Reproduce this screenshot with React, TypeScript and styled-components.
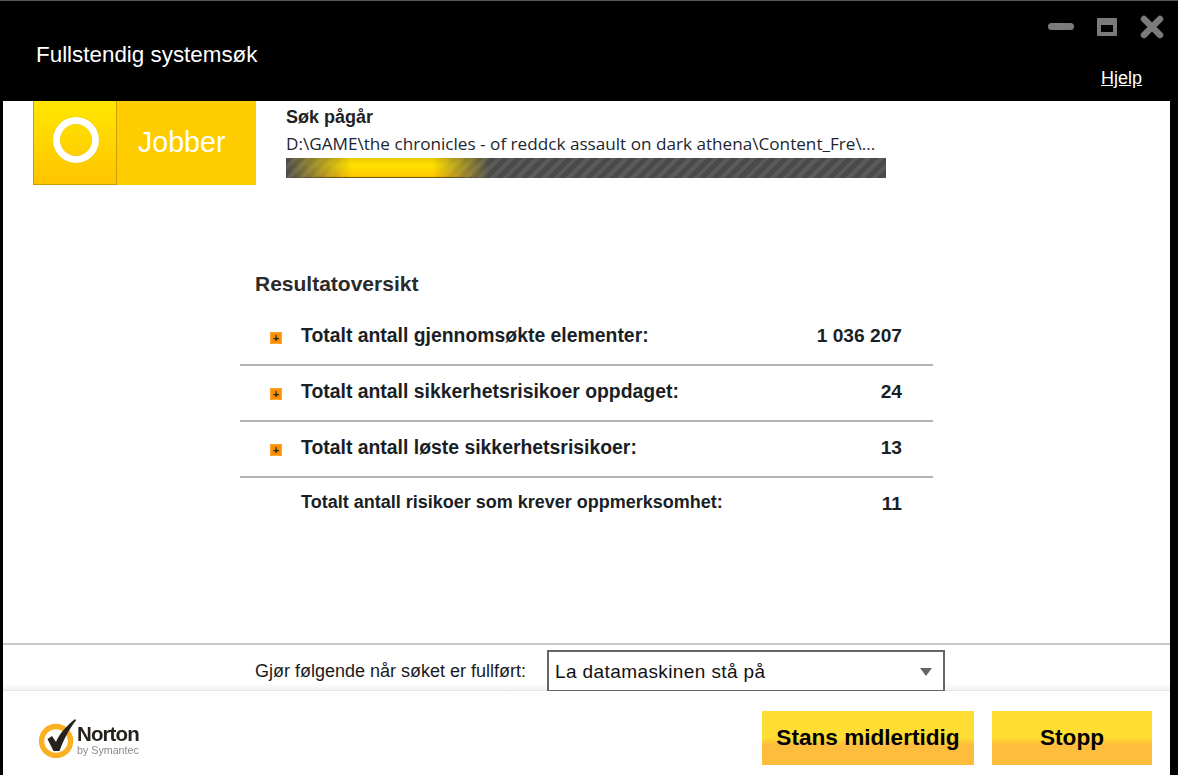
import React from "react";
import styled, { createGlobalStyle } from "styled-components";

const GlobalStyles = createGlobalStyle`
  html, body {
    margin: 0;
    padding: 0;
    height: 100%;
    overflow: hidden;
    background: #000;
    font-family: "Liberation Sans", Arial, sans-serif;
  }
`;

type Row = {
  label: string;
  value: string;
  expandable: boolean;
};

const rows: Row[] = [
  { label: "Totalt antall gjennomsøkte elementer:", value: "1 036 207", expandable: true },
  { label: "Totalt antall sikkerhetsrisikoer oppdaget:", value: "24", expandable: true },
  { label: "Totalt antall løste sikkerhetsrisikoer:", value: "13", expandable: true },
  { label: "Totalt antall risikoer som krever oppmerksomhet:", value: "11", expandable: false },
];

const NortonLogo = () => (
  <LogoWrap>
    <svg width="38" height="40" viewBox="0 0 38 40">
      <circle cx="17" cy="23" r="14.5" fill="none" stroke="#f9b122" strokeWidth="5.5" />
      <path
        d="M8.5 21 L13 18 L17 24 C20 17 25 10 36 1 L37 2.5 C30 11 24 23 20.5 33 L14.5 33 Z"
        fill="#26231f"
      />
    </svg>
    <LogoText>
      <LogoName>Norton</LogoName>
      <LogoSub>by Symantec</LogoSub>
    </LogoText>
  </LogoWrap>
);

export default function App() {
  return (
    <Window>
      <GlobalStyles />
      <Header>
        <Title>Fullstendig systemsøk</Title>
        <HeaderRight>
          <WindowButtons>
            <svg width="116" height="28" viewBox="0 0 116 28">
              <rect x="0" y="10" width="26" height="7" rx="3.5" fill="#7b7b7b" />
              <rect x="49" y="5" width="20" height="18" rx="1" fill="#7b7b7b" />
              <rect x="53" y="12" width="12" height="7" fill="#000" />
              <path d="M96 6 L112 22 M112 6 L96 22" stroke="#7b7b7b" strokeWidth="6.5" strokeLinecap="round" />
            </svg>
          </WindowButtons>
          <HelpLink>Hjelp</HelpLink>
        </HeaderRight>
      </Header>

      <Content>
        <JobRow>
          <Tile>
            <TileIcon>
              <Ring />
            </TileIcon>
            <TileLabel>Jobber</TileLabel>
          </Tile>
          <Progress>
            <ProgressTitle>Søk pågår</ProgressTitle>
            <ProgressPath>D:\GAME\the chronicles - of reddck assault on dark athena\Content_Fre\...</ProgressPath>
            <Track>
              <Fill />
            </Track>
          </Progress>
        </JobRow>

        <Results>
          <ResultsTitle>Resultatoversikt</ResultsTitle>
          {rows.map((row, i) => (
            <ResultRow key={row.label} $last={i === rows.length - 1}>
              <ExpandSlot>{row.expandable && <Expand>+</Expand>}</ExpandSlot>
              <RowLabel $small={!row.expandable}>{row.label}</RowLabel>
              <RowValue>{row.value}</RowValue>
            </ResultRow>
          ))}
        </Results>

        <WhenDone>
          <WhenLabel>Gjør følgende når søket er fullført:</WhenLabel>
          <SelectBox>
            <SelectText>La datamaskinen stå på</SelectText>
            <Caret />
          </SelectBox>
        </WhenDone>

        <Footer>
          <NortonLogo />
          <Actions>
            <ActionButton $width={212}>Stans midlertidig</ActionButton>
            <ActionButton $width={160}>Stopp</ActionButton>
          </Actions>
        </Footer>
      </Content>
    </Window>
  );
}

const Window = styled.div`
  width: 1178px;
  height: 775px;
  box-sizing: border-box;
  display: flex;
  flex-direction: column;
  background: #000;
  border-top: 1px solid #555;
  overflow: hidden;
`;

const Header = styled.header`
  height: 100px;
  flex: none;
  display: flex;
  justify-content: space-between;
  color: #fff;
`;

const Title = styled.h1`
  margin: 40px 0 0 36px;
  font-size: 22.4px;
  line-height: 28px;
  font-weight: 400;
`;

const HeaderRight = styled.div`
  width: 130px;
  display: flex;
  flex-direction: column;
`;

const WindowButtons = styled.div`
  height: 28px;
  margin-top: 12px;
  line-height: 0;
`;

const HelpLink = styled.a`
  margin: 26px 0 0 53px;
  font-size: 18px;
  line-height: 22px;
  color: #fff;
  text-decoration: underline;
`;

const Content = styled.main`
  flex: 1;
  min-height: 0;
  margin: 0 8px 0 3px;
  background: #fff;
  display: flex;
  flex-direction: column;
`;

const JobRow = styled.section`
  height: 84px;
  flex: none;
  display: flex;
  padding-left: 30px;
`;

const Tile = styled.div`
  width: 223px;
  display: flex;
  background: #ffcc00;
`;

const TileIcon = styled.div`
  width: 84px;
  box-sizing: border-box;
  display: flex;
  align-items: center;
  justify-content: center;
  padding: 0 0 6px 2px;
  background: linear-gradient(#ffe600, #ffc400);
  border: 1px solid #c8a000;
  border-top: none;
`;

const Ring = styled.div`
  width: 46px;
  height: 46px;
  box-sizing: border-box;
  border: 7px solid #fff;
  border-radius: 50%;
  box-shadow: 0 0 1px rgba(150, 130, 60, 0.5), inset 0 0 1px rgba(150, 130, 60, 0.5);
`;

const TileLabel = styled.div`
  margin-left: 21px;
  font-size: 28.6px;
  line-height: 82px;
  color: #fff;
`;

const Progress = styled.div`
  margin-left: 30px;
  width: 600px;
  display: flex;
  flex-direction: column;
`;

const ProgressTitle = styled.div`
  margin-top: 5px;
  font-size: 18px;
  line-height: 22px;
  font-weight: 700;
  color: #222;
`;

const ProgressPath = styled.div`
  margin-top: 5px;
  font-family: "Open Sans", sans-serif;
  font-size: 17.15px;
  line-height: 22px;
  color: #1c2530;
  white-space: nowrap;
`;

const Track = styled.div`
  margin-top: 3px;
  height: 20px;
  background: repeating-linear-gradient(135deg, #4a4a4a 0 5px, #5a5a5a 5px 9px);
`;

const Fill = styled.div`
  width: 204px;
  height: 100%;
  background: linear-gradient(#e8c800 0, #ffe000 35%, #ffc800 92%, #3a3000 100%);
  mask-image: linear-gradient(90deg, transparent 0, #000 32%, #000 72%, transparent 100%);
`;

const Results = styled.section`
  flex: 1;
  min-height: 0;
  margin-left: 237px;
  width: 693px;
  padding-top: 86px;
  box-sizing: border-box;
`;

const ResultsTitle = styled.h2`
  margin: 0 0 0 15px;
  height: 39px;
  font-size: 21px;
  line-height: 26px;
  font-weight: 700;
  color: #2a2a2a;
`;

const ResultRow = styled.div<{ $last: boolean }>`
  height: 56px;
  box-sizing: border-box;
  display: flex;
  align-items: center;
  padding-bottom: ${(p) => (p.$last ? "5px" : "3px")};
  border-bottom: ${(p) => (p.$last ? "none" : "2px solid #b4b4b4")};
`;

const ExpandSlot = styled.div`
  width: 61px;
  flex: none;
  padding: 5px 0 0 30px;
  box-sizing: border-box;
`;

const Expand = styled.div`
  width: 12px;
  height: 12px;
  background: #ff8c00;
  border: 1px solid #ffa733;
  box-sizing: border-box;
  font-size: 11px;
  line-height: 10px;
  font-weight: 700;
  text-align: center;
  color: #222;
`;

const RowLabel = styled.div<{ $small: boolean }>`
  flex: 1;
  font-size: ${(p) => (p.$small ? "18px" : "19.4px")};
  font-weight: 700;
  color: #1a1f26;
  margin-top: ${(p) => (p.$small ? "-2px" : "0")};
`;

const RowValue = styled.div`
  margin-right: 31px;
  font-size: 19.2px;
  font-weight: 700;
  color: #1a1f26;
`;

const WhenDone = styled.section`
  height: 48px;
  flex: none;
  box-sizing: border-box;
  display: flex;
  border-top: 2px solid #cacaca;
  padding: 5px 0 0 252px;
  background: linear-gradient(#fff 38px, #f2f2f2);
  border-bottom: 1px solid #e6e6e6;
`;

const WhenLabel = styled.div`
  width: 292px;
  font-size: 18px;
  line-height: 42px;
  color: #1a1a1a;
  white-space: nowrap;
`;

const SelectBox = styled.div`
  width: 398px;
  height: 41px;
  box-sizing: border-box;
  border: 2px solid #666;
  border-bottom-width: 1px;
  background: #fff;
  display: flex;
  align-items: center;
  justify-content: space-between;
  padding: 1px 11px 0 6px;
`;

const SelectText = styled.span`
  font-size: 19px;
  letter-spacing: 0.4px;
  color: #111;
`;

const Caret = styled.span`
  width: 0;
  height: 0;
  border-left: 6px solid transparent;
  border-right: 6px solid transparent;
  border-top: 8px solid #666;
`;

const Footer = styled.footer`
  height: 84px;
  flex: none;
  box-sizing: border-box;
  display: flex;
  justify-content: space-between;
  padding: 20px 18px 10px 36px;
`;

const LogoWrap = styled.div`
  display: flex;
  align-items: flex-start;
  margin-top: 7px;
  filter: blur(0.4px);
`;

const LogoText = styled.div`
  display: flex;
  flex-direction: column;
  margin: 6px 0 0 0;
`;

const LogoName = styled.span`
  font-size: 20.5px;
  line-height: 20px;
  font-weight: 700;
  letter-spacing: -0.9px;
  color: #26231f;
`;

const LogoSub = styled.span`
  font-size: 10.7px;
  line-height: 12px;
  color: #8a8a8a;
`;

const Actions = styled.div`
  display: flex;
  gap: 18px;
`;

const ActionButton = styled.button<{ $width: number }>`
  width: ${(p) => p.$width}px;
  height: 54px;
  padding: 0;
  border: none;
  background: linear-gradient(#ffdd33 0, #ffdd33 50%, #ffbd3d 62%, #ffbd3d 100%);
  font-family: "Liberation Sans", Arial, sans-serif;
  font-size: 22.6px;
  font-weight: 700;
  color: #000;
`;
